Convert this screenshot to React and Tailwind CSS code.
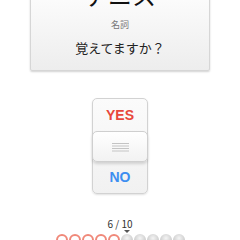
import React from "react";

const font = { fontFamily: '"Noto Sans CJK JP", "Noto Sans", sans-serif' };
const latin = { fontFamily: '"Liberation Sans", Arial, sans-serif' };

function Dot({ done }) {
  return done ? (
    <span className="block h-[12px] w-[12px] shrink-0 rounded-full border-2 border-[#f0897a] bg-white" />
  ) : (
    <span className="block h-[12px] w-[12px] shrink-0 rounded-full bg-[radial-gradient(circle_at_50%_35%,#f4f4f4_0%,#d2d2d2_55%,#b8b8b8_100%)]" />
  );
}

export default function App() {
  const total = 10;
  const current = 6;

  return (
    <div className="h-[240px] w-[240px] overflow-hidden bg-white" style={font}>
      {/* ---- word card ---- */}
      <div className="mx-auto -mt-[20px] flex h-[91px] w-[180px] flex-col items-center rounded-b-[2px] border border-[#d6d6d6] bg-gradient-to-b from-white to-[#ededed] shadow-[0_1px_2px_rgba(0,0,0,0.18)]">
        <div className="mt-[-2px] text-[24px] leading-[32px] text-[#111]">テニス</div>
        <div className="mt-[8px] text-[9px] leading-[11px] text-[#777]">名詞</div>
        <div className="mt-[10px] text-[13px] leading-[16px] text-[#222]">覚えてますか？</div>
      </div>

      {/* ---- yes / no switch ---- */}
      <div className="mx-auto mt-[27px] flex h-[96px] w-[56px] flex-col rounded-[5px] border border-[#d2d2d2] bg-gradient-to-b from-[#fbfbfb] to-[#f1f1f1] shadow-[0_1px_2px_rgba(0,0,0,0.12)]">
        <div className="flex h-[32px] items-center justify-center text-[14px] font-bold text-[#e8473c]" style={latin}>
          YES
        </div>
        <div className="-mx-px flex h-[31px] items-center justify-center rounded-[5px] border border-[#cfcfcf] bg-gradient-to-b from-white to-[#f2f2f2] shadow-[0_2px_3px_rgba(0,0,0,0.15)]">
          <svg width="17" height="10" viewBox="0 0 17 10">
            <g stroke="#c4c4c4" strokeWidth="1">
              <line x1="0" y1="1.5" x2="17" y2="1.5" />
              <line x1="0" y1="4" x2="17" y2="4" />
              <line x1="0" y1="6.5" x2="17" y2="6.5" />
              <line x1="0" y1="9" x2="17" y2="9" />
            </g>
          </svg>
        </div>
        <div className="flex flex-1 items-center justify-center text-[14px] font-bold text-[#3d8ef0]" style={latin}>
          NO
        </div>
      </div>

      {/* ---- progress ---- */}
      <div className="mt-[24px] text-center text-[10px] leading-[12px] text-[#333]">
        {current} / {total}
      </div>
      <div className="mx-auto flex w-[130px] gap-[1px] pl-[1px]">
        {Array.from({ length: total }).map((_, i) => (
          <div key={i} className="flex w-[12px] flex-col items-center">
            <span
              className={`block h-0 w-0 border-x-[3px] border-t-[3px] border-x-transparent ${
                i === current - 1 ? "border-t-[#555]" : "border-t-transparent"
              }`}
            />
            <div className="mt-px">
              <Dot done={i < current - 1} />
            </div>
          </div>
        ))}
      </div>
    </div>
  );
}
